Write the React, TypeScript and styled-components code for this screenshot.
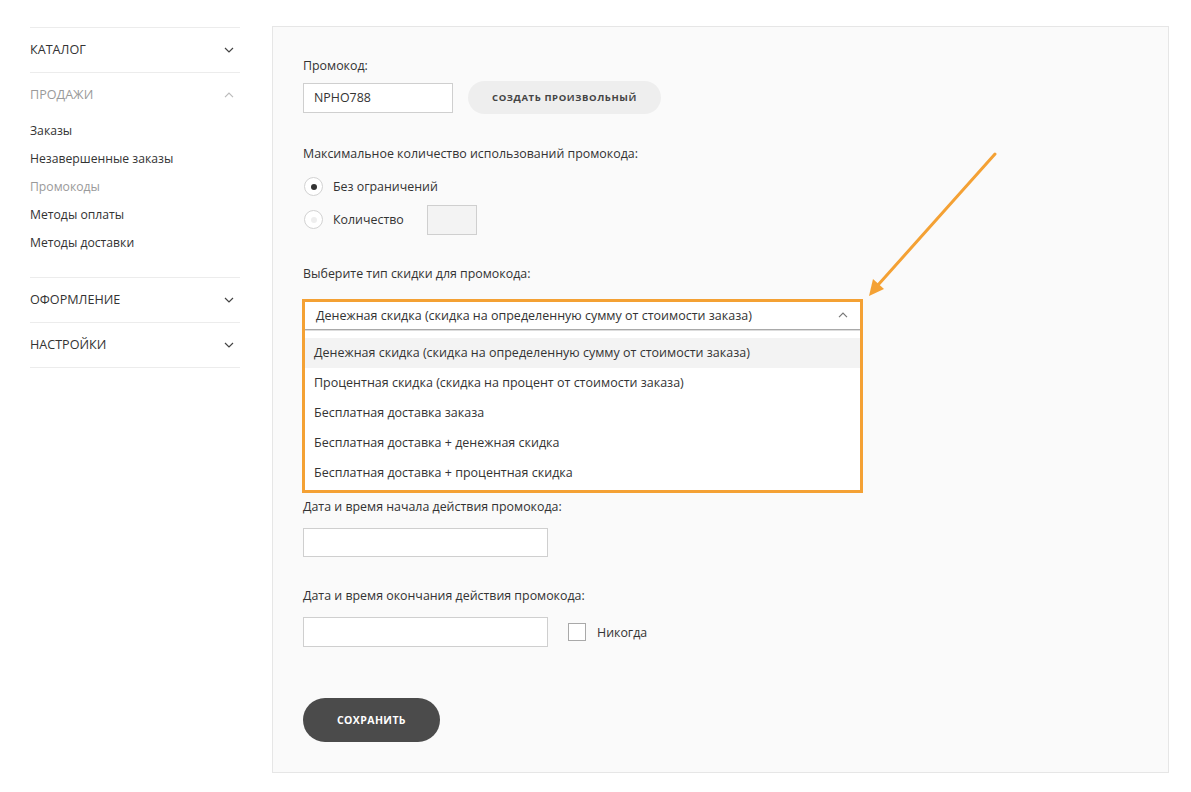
import React from "react";
import styled, { createGlobalStyle } from "styled-components";

const Global = createGlobalStyle`
  html, body { margin: 0; padding: 0; background: #ffffff; }
  body { font-family: "Open Sans", "Noto Sans", sans-serif; color: #333333; }
  * { box-sizing: border-box; }
`;

const Page = styled.div`
  display: flex;
  align-items: flex-start;
  padding-top: 26px;
  position: relative;
  width: 1191px;
  height: 792px;
`;

const Sidebar = styled.nav`
  width: 210px;
  margin-left: 30px;
  margin-right: 32px;
  margin-top: 1px;
  border-top: 1px solid #ececec;
`;

const Section = styled.div`
  border-bottom: 1px solid #ececec;
`;

const SectionHead = styled.div<{ $muted?: boolean }>`
  display: flex;
  align-items: center;
  justify-content: space-between;
  height: 44px;
  padding-bottom: 1px;
  font-size: 12.6px;
  text-transform: uppercase;
  color: ${(p) => (p.$muted ? "#9a9a9a" : "#333333")};
  padding-right: 6px;
`;

const SubList = styled.div`
  display: flex;
  flex-direction: column;
  padding-bottom: 20px;
`;

const SubItem = styled.div<{ $active?: boolean }>`
  height: 28px;
  line-height: 28px;
  font-size: 12.2px;
  color: ${(p) => (p.$active ? "#9a9a9a" : "#333333")};
`;

const Panel = styled.main`
  width: 897px;
  height: 747px;
  background: #fafafa;
  border: 1px solid #e6e6e6;
  padding: 29px 30px 30px 30px;
  display: flex;
  flex-direction: column;
`;

const Label = styled.div<{ $gap?: number; $top?: number }>`
  font-size: 12.4px;
  line-height: 20px;
  color: #333333;
  margin-top: ${(p) => p.$top ?? 0}px;
  margin-bottom: ${(p) => p.$gap ?? 6}px;
`;

const Row = styled.div`
  display: flex;
  align-items: center;
`;

const TextInput = styled.div<{ $w: number; $bg?: string }>`
  width: ${(p) => p.$w}px;
  height: 30px;
  border: 1px solid #cfcfcf;
  background: ${(p) => p.$bg ?? "#ffffff"};
  font-size: 12.4px;
  line-height: 28px;
  padding-left: 10px;
  color: #333;
`;

const GhostButton = styled.button`
  margin-left: 15px;
  width: 193px;
  height: 33px;
  border: none;
  border-radius: 17px;
  background: #eeeeee;
  font-family: inherit;
  font-size: 9.5px;
  font-weight: 700;
  letter-spacing: 0.6px;
  text-transform: uppercase;
  color: #444;
  align-self: flex-start;
`;

const RadioRow = styled.div<{ $h: number; $top?: number }>`
  display: flex;
  align-items: center;
  height: ${(p) => p.$h}px;
  margin-top: ${(p) => p.$top ?? 0}px;
  font-size: 12.4px;
`;

const Radio = styled.span<{ $checked?: boolean }>`
  width: 19px;
  height: 19px;
  border-radius: 50%;
  border: 1px solid #d2d2d2;
  background: #fff;
  margin-left: 1px;
  margin-right: 10px;
  display: flex;
  align-items: center;
  justify-content: center;
  &::after {
    content: "";
    width: 6px;
    height: 6px;
    border-radius: 50%;
    background: ${(p) => (p.$checked ? "#333333" : "#eeeeee")};
  }
`;

const RadioText = styled.span<{ $w?: number }>`
  width: ${(p) => (p.$w ? `${p.$w}px` : "auto")};
`;

const Highlight = styled.div`
  margin-left: -1px;
  width: 561px;
  border: 3px solid #f4a134;
  background: #ffffff;
`;

const SelectHead = styled.div`
  height: 28px;
  display: flex;
  align-items: center;
  justify-content: space-between;
  padding: 0 12px 0 11px;
  font-size: 12.5px;
  color: #333;
  border-bottom: 1px solid #a9a9a9;
  box-shadow: 0 1px 0 #dddddd;
`;

const OptionList = styled.div`
  padding: 8px 0 2px;
  display: flex;
  flex-direction: column;
`;

const Option = styled.div<{ $sel?: boolean }>`
  height: 30px;
  line-height: 30px;
  padding-left: 9px;
  font-size: 12.5px;
  color: #333;
  background: ${(p) => (p.$sel ? "#f3f3f3" : "#ffffff")};
`;

const Checkbox = styled.span`
  width: 18px;
  height: 18px;
  border: 1px solid #a9a9a9;
  background: #fff;
  margin-left: 20px;
  margin-right: 11px;
`;

const CheckText = styled.span`
  font-size: 12.4px;
`;

const SaveButton = styled.button`
  margin-top: 51px;
  width: 137px;
  height: 44px;
  border: none;
  border-radius: 22px;
  background: #4b4b4b;
  color: #ffffff;
  font-family: inherit;
  font-size: 10.5px;
  font-weight: 700;
  letter-spacing: 0.4px;
  text-transform: uppercase;
`;

const Arrow = styled.svg`
  position: absolute;
  left: 0;
  top: 0;
  pointer-events: none;
`;

const Chevron = ({ up, color = "#444" }: { up?: boolean; color?: string }) => (
  <svg width="10" height="6" viewBox="0 0 10 6">
    <path
      d={up ? "M1 5.2 L5 1.2 L9 5.2" : "M1 1 L5 5 L9 1"}
      fill="none"
      stroke={color}
      strokeWidth="1.2"
    />
  </svg>
);

export default function App() {
  return (
    <>
      <Global />
      <Page>
        <Sidebar>
          <Section>
            <SectionHead>
              Каталог <Chevron />
            </SectionHead>
          </Section>
          <Section>
            <SectionHead $muted>
              Продажи <Chevron up color="#bbbbbb" />
            </SectionHead>
            <SubList>
              <SubItem>Заказы</SubItem>
              <SubItem>Незавершенные заказы</SubItem>
              <SubItem $active>Промокоды</SubItem>
              <SubItem>Методы оплаты</SubItem>
              <SubItem>Методы доставки</SubItem>
            </SubList>
          </Section>
          <Section>
            <SectionHead>
              Оформление <Chevron />
            </SectionHead>
          </Section>
          <Section>
            <SectionHead>
              Настройки <Chevron />
            </SectionHead>
          </Section>
        </Sidebar>
        <Panel>
          <Label $gap={5}>Промокод:</Label>
          <Row>
            <TextInput $w={150}>NPHO788</TextInput>
            <GhostButton>Создать произвольный</GhostButton>
          </Row>
          <Label $top={30} $gap={11}>
            Максимальное количество использований промокода:
          </Label>
          <RadioRow $h={24}>
            <Radio $checked />
            <RadioText>Без ограничений</RadioText>
          </RadioRow>
          <RadioRow $h={30} $top={6}>
            <Radio />
            <RadioText $w={94}>Количество</RadioText>
            <TextInput $w={50} $bg="#f3f3f3" />
          </RadioRow>
          <Label $top={29} $gap={15}>
            Выберите тип скидки для промокода:
          </Label>
          <Highlight>
            <SelectHead>
              <span>Денежная скидка (скидка на определенную сумму от стоимости заказа)</span>
              <Chevron up color="#777" />
            </SelectHead>
            <OptionList>
              <Option $sel>Денежная скидка (скидка на определенную сумму от стоимости заказа)</Option>
              <Option>Процентная скидка (скидка на процент от стоимости заказа)</Option>
              <Option>Бесплатная доставка заказа</Option>
              <Option>Бесплатная доставка + денежная скидка</Option>
              <Option>Бесплатная доставка + процентная скидка</Option>
            </OptionList>
          </Highlight>
          <Label $top={4} $gap={11}>
            Дата и время начала действия промокода:
          </Label>
          <TextInput $w={245} />
          <Label $top={29} $gap={11}>
            Дата и время окончания действия промокода:
          </Label>
          <Row>
            <TextInput $w={245} />
            <Checkbox />
            <CheckText>Никогда</CheckText>
          </Row>
          <SaveButton>Сохранить</SaveButton>
        </Panel>
        <Arrow width="1191" height="792" viewBox="0 0 1191 792">
          <line x1="995" y1="154" x2="878" y2="285" stroke="#f4a134" strokeWidth="3" strokeLinecap="round" />
          <polygon points="869,296 873,279 884,289" fill="#f4a134" />
        </Arrow>
      </Page>
    </>
  );
}
